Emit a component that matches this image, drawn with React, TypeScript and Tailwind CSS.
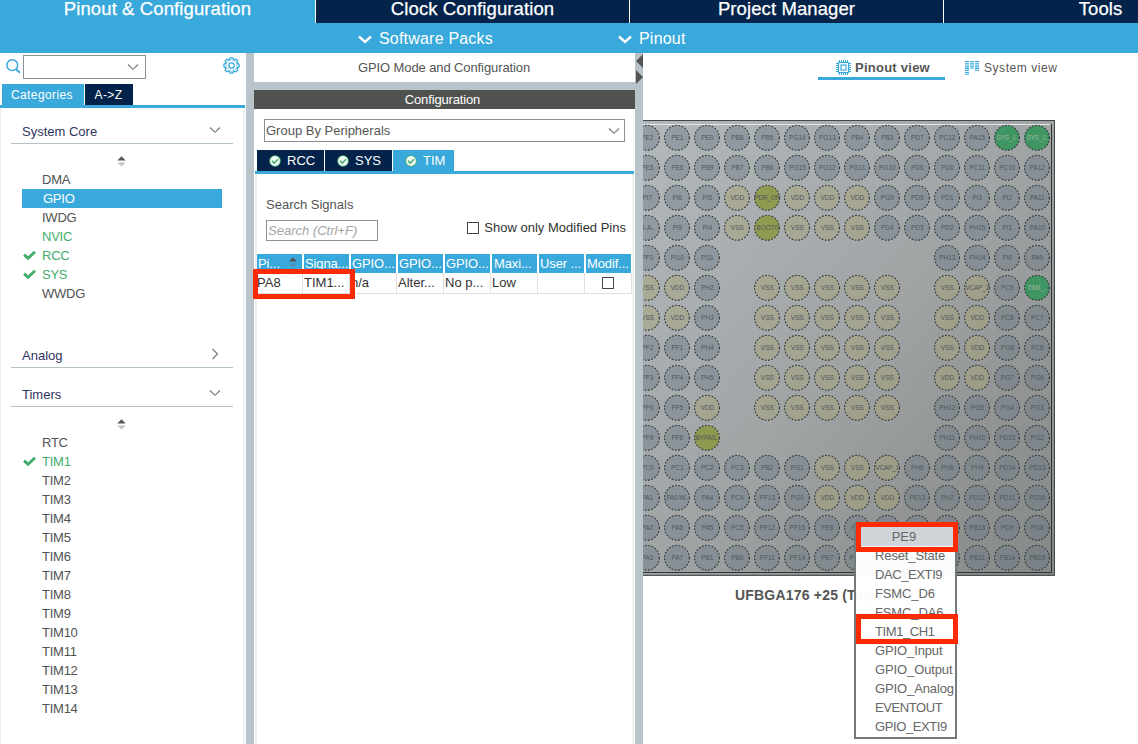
import React from "react";

const PINS: string[] = [
  "PE2|PE1|PE0|PB8|PB5|PG14|PG13|PB4|PB3|PD7|PC12|PA15|SYS_J..|SYS_J..",
  "PE5|PE6|PB9|PB7|PB6|PG15|PG12|PG11|PG10|PD6|PD0|PC11|PC10|PA12",
  "PI7|PI6|PI5|VDD|PDR_ON|VDD|VDD|VDD|PG9|PD5|PD1|PI3|PI2|PA11",
  "8- A..|PI9|PI4|VSS|BOOT0|VSS|VSS|VSS|PD4|PD3|PD2|PH15|PI1|PA10",
  "PF0|PI10|PI11||||||||PH13|PH14|PI0|PA9",
  "VSS|VDD|PH2||VSS|VSS|VSS|VSS|VSS||VSS|VCAP_2|PC9|TIM1_..",
  "VSS|VDD|PH3||VSS|VSS|VSS|VSS|VSS||VSS|VDD|PC8|PC7",
  "PF2|PF1|PH4||VSS|VSS|VSS|VSS|VSS||VSS|VDD|PG8|PC6",
  "PF3|PF4|PH5||VSS|VSS|VSS|VSS|VSS||VDD|VDD|PG7|PG6",
  "PF6|PF5|VDD||VSS|VSS|VSS|VSS|VSS||PH12|PG5|PG4|PG3",
  "PF9|PF8|BYPAS..||||||||PH11|PH10|PD15|PG2",
  "PC0|PC1|PC2|PC3|PB2|PG1|VSS|VSS|VCAP_1|PH6|PH8|PH9|PD14|PD13",
  "PA1|PA0-W..|PA4|PC4|PF13|PG0|VDD|VDD|VDD|PE13|PH7|PD12|PD11|PD10",
  "PA2|PA6|PA5|PC5|PF12|PF15|PE8|PE9|PE11|PE14|PB12|PB13|PD9|PD8",
  "PA3|PA7|PB1|PB0|PF11|PF14|PE7|PE10|PE12|PE15|PB10|PB11|PB14|PB15",
];

function pinFill(name: string) {
  if (/^(SYS|TIM)/.test(name)) return "rgba(50,148,90,0.88)";
  if (/^(PDR|BOOT|BYP)/.test(name)) return "rgba(140,152,66,0.85)";
  if (/^V/.test(name)) return "rgba(166,162,112,0.42)";
  return "rgba(104,118,134,0.42)";
}

function Chip() {
  return (
    <svg width="412" height="456" viewBox="0 0 412 456" className="block">
      <defs>
        <linearGradient id="body" x1="0" y1="0" x2="1" y2="1">
          <stop offset="0" stopColor="#b3b8bb" />
          <stop offset="0.5" stopColor="#a0a4a5" />
          <stop offset="0.75" stopColor="#929594" />
          <stop offset="1" stopColor="#848887" />
        </linearGradient>
      </defs>
      <rect width="412" height="456" fill="url(#body)" />
      <path d="M0 .5H411.5V455.3H0" fill="none" stroke="#43474a" />
      <path d="M0 4.5H407" stroke="#e4e7e8" />
      <path d="M408.5 4V452.5H0" fill="none" stroke="#303536" />
      {PINS.map((row, r) =>
        row.split("|").map((name, c) => {
          if (!name) return null;
          const green = /^(SYS|TIM)/.test(name);
          const wide = name.length > 5;
          return (
            <g key={`${r}-${c}`}>
              <circle
                cx={4 + c * 30}
                cy={17.8 + r * 30}
                r="12.4"
                fill={pinFill(name)}
                stroke="#34383a"
                strokeWidth="1.1"
                strokeDasharray="1.8 1.5"
              />
              <text
                x={4.3 + c * 30}
                y={20.3 + r * 30}
                textAnchor="middle"
                fontSize="6.6"
                letterSpacing={wide ? -0.3 : -0.1}
                fill={green ? "#9cb49e" : "#50575a"}
              >
                {name}
              </text>
            </g>
          );
        }),
      )}
    </svg>
  );
}

function Chevron({ dir = "down", className = "" }: { dir?: "down" | "right"; className?: string }) {
  return dir === "down" ? (
    <svg width="12" height="8" viewBox="0 0 12 8" className={className} fill="none" stroke="#777" strokeWidth="1.1">
      <path d="M1 1.5l5 4.8L11 1.5" />
    </svg>
  ) : (
    <svg width="8" height="12" viewBox="0 0 8 12" className={className} fill="none" stroke="#777" strokeWidth="1.1">
      <path d="M1.5 1l5 5-5 5" />
    </svg>
  );
}

function BarChevron() {
  return (
    <svg width="14" height="9" viewBox="0 0 14 9" fill="none" stroke="#fff" strokeWidth="2.4" className="mt-[2px]">
      <path d="M1 1.5l6 5.3 6-5.3" />
    </svg>
  );
}

function Sorter() {
  return (
    <svg width="9" height="11" viewBox="0 0 9 11" className="block">
      <path d="M.3 4.6L4.5 .3l4.2 4.3z" fill="#555" />
      <path d="M.3 6.4h8.4L4.5 10.5z" fill="#c4c4c4" />
    </svg>
  );
}

function Check() {
  return (
    <svg width="13" height="11" viewBox="0 0 13 11" fill="none" stroke="#43ad6c" strokeWidth="2.9">
      <path d="M1.1 4.6L5 8.2 12 1.8" />
    </svg>
  );
}

function Section({ title, dir = "down" }: { title: string; dir?: "down" | "right" }) {
  return (
    <div className="ml-[11px] flex h-6 w-[222px] items-center justify-between border-b border-[#b4c2ca] pl-[11px] text-[#2f3560]">
      <span>{title}</span>
      <span className="mb-1 flex w-[36px] justify-center">
        <Chevron dir={dir} />
      </span>
    </div>
  );
}

function Item({ name, active, green, checked }: { name: string; active?: boolean; green?: boolean; checked?: boolean }) {
  return (
    <div
      className={`ml-[22px] flex h-[19px] w-[200px] items-center tracking-[-0.25px] ${active ? "bg-[#39a9dc] text-white" : green ? "text-[#43ad6c]" : "text-[#525252]"}`}
    >
      <span className="flex w-5 pl-[1px]">{checked && <Check />}</span>
      <span className={active ? "pl-px" : ""}>{name}</span>
    </div>
  );
}

function Gear() {
  const teeth = Array.from({ length: 8 }, (_, i) => i * 45);
  return (
    <svg width="17" height="17" viewBox="-8.5 -8.5 17 17" fill="none" stroke="#39a9dc">
      {teeth.map((a) => (
        <path key={a} transform={`rotate(${a})`} d="M-2.4 -5.5L-1.3 -7.6H1.3L2.4 -5.5" strokeWidth="1.3" />
      ))}
      <circle r="5.6" strokeWidth="0.7" />
      <circle r="2.7" strokeWidth="1.3" />
    </svg>
  );
}

function LeftPanel() {
  return (
    <aside className="flex w-[246px] shrink-0 flex-col bg-white">
      <div className="flex h-[31px] items-start pt-[2px] pl-[5px]">
        <svg width="16" height="17" viewBox="0 0 16 17" className="mt-[3px]" fill="none" stroke="#39a9dc" strokeWidth="1.5">
          <circle cx="7.3" cy="7.2" r="5.4" />
          <path d="M11 11.2l4 3.6" strokeWidth="1.9" />
        </svg>
        <div className="ml-[2px] flex h-6 w-[123px] items-center justify-end border border-[#8c9196] pr-[6px]">
          <Chevron />
        </div>
        <span className="mt-[2px] ml-[77px]">
          <Gear />
        </span>
      </div>
      <div className="flex h-[21px] gap-px pl-[2px] text-[12px] tracking-[0.4px] text-white">
        <div className="flex w-[82px] items-center justify-center bg-[#39a9dc] pr-[2px]">Categories</div>
        <div className="flex w-12 items-center justify-center bg-[#03234b] pr-[1px]">A-&gt;Z</div>
      </div>
      <div className="h-[3px] w-[245px] bg-[#39a9dc]" />
      <div className="mr-px flex-1 border-r-2 border-l border-[#efefef]">
        <div className="-ml-px pt-3">
          <Section title="System Core" />
          <div className="flex h-[26px] pt-[12px] pl-[117px]">
            <Sorter />
          </div>
          <Item name="DMA" />
          <Item name="GPIO" active />
          <Item name="IWDG" />
          <Item name="NVIC" green />
          <Item name="RCC" green checked />
          <Item name="SYS" green checked />
          <Item name="WWDG" />
          <div className="h-[41px]" />
          <Section title="Analog" dir="right" />
          <div className="h-[15px]" />
          <Section title="Timers" />
          <div className="flex h-[26px] pt-[12px] pl-[117px]">
            <Sorter />
          </div>
          <Item name="RTC" />
          <Item name="TIM1" green checked />
          {[2, 3, 4, 5, 6, 7, 8, 9, 10, 11, 12, 13, 14].map((n) => (
            <Item key={n} name={`TIM${n}`} />
          ))}
        </div>
      </div>
    </aside>
  );
}

function PeriphTab({ name, className }: { name: string; className: string }) {
  return (
    <div className={`flex items-center gap-[6px] text-[13px] text-white ${className}`}>
      <svg width="12" height="12" viewBox="0 0 12 12">
        <circle cx="6" cy="6" r="5.8" fill="#43ad6c" />
        <circle cx="6" cy="6" r="4.9" fill="#f2fbf5" />
        <path d="M3 5.8l2.3 2.4L9 4.2" fill="none" stroke="#43ad6c" strokeWidth="1.6" />
      </svg>
      {name}
    </div>
  );
}

const COLS = ["Pi...", "Signa...", "GPIO...", "GPIO...", "GPIO...", "Maxi...", "User ...", "Modif..."];
const CELLS = ["PA8", "TIM1...", "n/a", "Alter...", "No p...", "Low", ""];

function MiddlePanel() {
  return (
    <section className="flex w-[381px] shrink-0 flex-col bg-white">
      <div className="flex h-[29px] items-center justify-center pr-px tracking-[-0.1px] text-[#555]">GPIO Mode and Configuration</div>
      <div className="h-2 bg-[#b8c4ca]" />
      <div className="flex h-[19px] items-center justify-center bg-[#505250] pr-1 tracking-[-0.15px] text-white">Configuration</div>
      <div className="mt-[10px] ml-[10px] flex h-[23px] w-[361px] items-center justify-between border border-[#8c9196] pr-1 pl-px text-[#555]">
        Group By Peripherals
        <Chevron />
      </div>
      <div className="mt-2 ml-[3px] flex h-[21px] gap-px">
        <PeriphTab name="RCC" className="w-[67px] bg-[#03234b] pl-3" />
        <PeriphTab name="SYS" className="w-[67px] bg-[#03234b] pl-3" />
        <PeriphTab name="TIM" className="w-[61px] bg-[#39a9dc] pl-3" />
      </div>
      <div className="ml-px h-[3px] w-[379px] bg-[#39a9dc]" />
      <div className="mx-px flex-1 border-x-2 border-[#efefef]">
        <div className="pt-[23px] pl-[9px] leading-[15px] text-[#555]">Search Signals</div>
        <div className="mt-2 flex h-[21px] justify-between pr-[6px] pl-[9px]">
          <div className="flex w-[112px] items-center border border-[#8c9196] pl-px text-[13px] text-[#a4a4a4] italic">Search (Ctrl+F)</div>
          <div className="flex h-[15px] items-center gap-[5px] text-[#333]">
            <span className="size-3 border border-[#444]" />
            Show only Modified Pins
          </div>
        </div>
        <div className="relative mt-[13px]">
          <div className="flex h-[19px] gap-[2px] text-white">
            {COLS.map((c, i) => (
              <div
                key={i}
                className={`flex w-[45px] shrink-0 items-center bg-[#39a9dc] tracking-[-0.1px] whitespace-nowrap ${i === 5 ? "pl-[2px]" : "pl-px"}`}
              >
                {c}
                {i === 0 && (
                  <svg width="8" height="11" viewBox="0 0 8 11" className="mb-[3px] ml-[9px]">
                    <path d="M0 4.5L4 .3l4 4.2z" fill="#555" />
                    <path d="M0 6.5h8L4 10.3z" fill="#4d91b4" />
                  </svg>
                )}
              </div>
            ))}
          </div>
          <div className="flex h-[21px] text-[#333]">
            {CELLS.map((c, i) => (
              <div
                key={i}
                className={`flex shrink-0 items-center border-r border-b border-[#e0e0e0] whitespace-nowrap ${i === 0 ? "w-[46px]" : "w-[47px] pl-px"}`}
              >
                {c}
              </div>
            ))}
            <div className="flex w-[47px] items-center justify-center border-r border-b border-[#e0e0e0]">
              <span className="size-3 border border-[#444]" />
            </div>
          </div>
          <div className="absolute top-[15px] left-[-4px] h-[30px] w-[102px] border-5 border-[#fe2a04]" />
        </div>
      </div>
    </section>
  );
}

function ChipIcon() {
  const p = [3.5, 5.5, 7.5, 9.5, 11.5];
  return (
    <svg width="15" height="15" viewBox="0 0 15 15" fill="none" stroke="#39a9dc">
      <rect x="2.5" y="2.5" width="10" height="10" strokeWidth="1.1" />
      <rect x="5" y="5" width="5" height="5" strokeWidth="1.2" />
      {p.map((v) => (
        <path key={v} d={`M${v} 0v2.5M${v} 12.5v2.5M0 ${v}h2.5M12.5 ${v}h2.5`} />
      ))}
    </svg>
  );
}

function SystemIcon() {
  return (
    <svg width="15" height="14" viewBox="0 0 15 14" fill="none" stroke="#39a9dc">
      <path d="M2 0v14" strokeWidth="4" strokeDasharray="1.3 0.9" />
      <path d="M7 0v7.5M12 0v9.8" strokeWidth="4" strokeDasharray="1.3 0.9" />
    </svg>
  );
}

const MENU = ["Reset_State", "DAC_EXTI9", "FSMC_D6", "FSMC_DA6", "TIM1_CH1", "GPIO_Input", "GPIO_Output", "GPIO_Analog", "EVENTOUT", "GPIO_EXTI9"];

function ContextMenu() {
  return (
    <div className="absolute top-[522px] left-[854px] h-[217px] w-[103px] text-[13px] text-[#666]">
      <div className="h-full border-2 border-[#747a7c] bg-white/97">
        <div className="flex h-[22px] items-center justify-center bg-[#d0d5da] pt-[3px] pr-[3px]">PE9</div>
        {MENU.map((m) => (
          <div
            key={m}
            className={`flex h-[19px] items-center pl-[19px] whitespace-nowrap ${/EXTI9|TIM1|EVENT/.test(m) ? "tracking-[-0.4px]" : "tracking-[-0.12px]"}`}
          >
            {m}
          </div>
        ))}
      </div>
      <div className="absolute top-0 left-[2px] h-[30px] w-[102px] border-5 border-[#fe2a04]" />
      <div className="absolute top-[92px] left-[2px] h-[30px] w-[102px] border-5 border-[#fe2a04]" />
    </div>
  );
}

function PinoutPanel() {
  return (
    <main className="min-w-0 flex-1 overflow-hidden bg-white text-[#555]">
      <div className="flex h-[27px] pl-[175px]">
        <div className="flex w-[127px] items-center gap-[4px] border-b-3 border-[#39a9dc] pt-[5px] pl-[18px] font-bold tracking-[0.25px] whitespace-nowrap">
          <ChipIcon />
          Pinout view
        </div>
        <div className="flex items-center gap-1 pt-[2px] pl-5 text-[12px] tracking-[0.55px]">
          <SystemIcon />
          System view
        </div>
      </div>
      <div className="pt-10">
        <Chip />
      </div>
      <div className="pt-[10px] pl-[92px] text-[14px] leading-[18px] font-bold tracking-[0.2px]">UFBGA176 +25 (Top view)</div>
    </main>
  );
}

const TABS = ["Pinout & Configuration", "Clock Configuration", "Project Manager", "Tools"];

export default function App() {
  return (
    <div className="relative flex h-[744px] w-[1138px] flex-col overflow-hidden font-['Liberation_Sans',Arial,sans-serif] text-[13px]">
      <header className="flex h-[23px] w-[1260px] shrink-0 text-[18.5px] leading-[18px] tracking-[0.1px] text-white [-webkit-text-stroke:0.25px_#fff]">
        {TABS.map((t, i) => (
          <div
            key={t}
            className={`flex shrink-0 items-center justify-center border-r border-white pb-[5px] ${i === 0 ? "w-[316px] bg-[#39a9dc]" : "w-[314px] bg-[#03234b]"}`}
          >
            {t}
          </div>
        ))}
      </header>
      <nav className="flex h-[30px] shrink-0 items-center bg-[#39a9dc] pl-[358px] text-[16px] tracking-[0.2px] text-white">
        <div className="flex w-[260px] items-center gap-[7px] pt-px">
          <BarChevron />
          Software Packs
        </div>
        <div className="flex items-center gap-[7px] pt-px">
          <BarChevron />
          Pinout
        </div>
      </nav>
      <div className="flex min-h-0 flex-1">
        <LeftPanel />
        <div className="w-2 shrink-0 bg-[#b8c4ca]" />
        <MiddlePanel />
        <div className="w-2 shrink-0 bg-[#b8c4ca]">
          <svg width="8" height="32" viewBox="0 0 8 32">
            <path d="M8 1v14L1 8zM1 17v14l7-7z" fill="#555" />
          </svg>
        </div>
        <PinoutPanel />
      </div>
      <ContextMenu />
    </div>
  );
}
